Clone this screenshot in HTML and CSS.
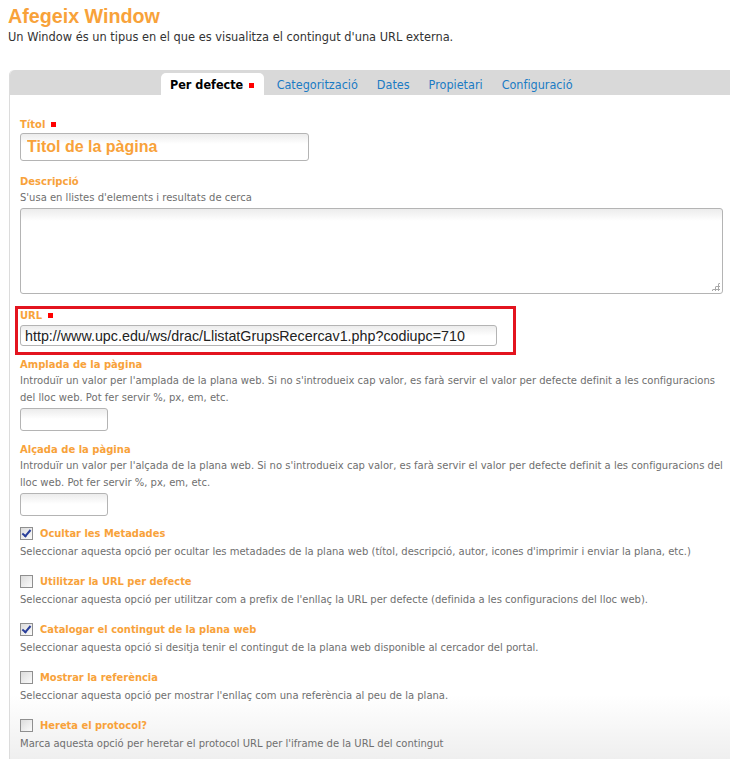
FILE: index.html
```html
<!DOCTYPE html>
<html lang="ca">
<head>
  <meta charset="UTF-8" />
  <title>Afegeix Window</title>
  <link rel="stylesheet" href="styles.css">
</head>
<body>
  <h1 class="title">Afegeix Window</h1>
  <p class="intro">Un Window és un tipus en el que es visualitza el contingut d'una URL externa.</p>

  <div class="panel">
    <ul class="tabs">
      <li class="tab active">Per defecte <span class="req"></span></li>
      <li class="tab">Categorització</li>
      <li class="tab">Dates</li>
      <li class="tab">Propietari</li>
      <li class="tab">Configuració</li>
    </ul>

    <div class="content">
      <div class="field field-first">
        <label class="label">Títol <span class="req"></span></label>
        <input type="text" class="input input-title" value="Titol de la pàgina" />
      </div>

      <div class="field">
        <label class="label">Descripció</label>
        <p class="help">S'usa en llistes d'elements i resultats de cerca</p>
        <div class="textarea"><span class="grip"></span></div>
      </div>

      <div class="field field-error">
        <label class="label">URL <span class="req"></span></label>
        <input type="text" class="input input-url" value="http://www.upc.edu/ws/drac/LlistatGrupsRecercav1.php?codiupc=710" />
      </div>

      <div class="field field-small">
        <label class="label">Amplada de la pàgina</label>
        <p class="help">Introduïr un valor per l'amplada de la plana web. Si no s'introdueix cap valor, es farà servir el valor per defecte definit a les configuracions del lloc web. Pot fer servir %, px, em, etc.</p>
        <input type="text" class="input input-small" />
      </div>

      <div class="field">
        <label class="label">Alçada de la pàgina</label>
        <p class="help">Introduïr un valor per l'alçada de la plana web. Si no s'introdueix cap valor, es farà servir el valor per defecte definit a les configuracions del lloc web. Pot fer servir %, px, em, etc.</p>
        <input type="text" class="input input-small" />
      </div>

      <div class="check">
        <div class="check-row"><span class="box checked"></span><span class="label">Ocultar les Metadades</span></div>
        <p class="help">Seleccionar aquesta opció per ocultar les metadades de la plana web (títol, descripció, autor, icones d'imprimir i enviar la plana, etc.)</p>
      </div>

      <div class="check">
        <div class="check-row"><span class="box"></span><span class="label">Utilitzar la URL per defecte</span></div>
        <p class="help">Seleccionar aquesta opció per utilitzar com a prefix de l'enllaç la URL per defecte (definida a les configuracions del lloc web).</p>
      </div>

      <div class="check">
        <div class="check-row"><span class="box checked"></span><span class="label">Catalogar el contingut de la plana web</span></div>
        <p class="help">Seleccionar aquesta opció si desitja tenir el contingut de la plana web disponible al cercador del portal.</p>
      </div>

      <div class="check">
        <div class="check-row"><span class="box"></span><span class="label">Mostrar la referència</span></div>
        <p class="help">Seleccionar aquesta opció per mostrar l'enllaç com una referència al peu de la plana.</p>
      </div>

      <div class="check">
        <div class="check-row"><span class="box"></span><span class="label">Hereta el protocol?</span></div>
        <p class="help">Marca aquesta opció per heretar el protocol URL per l'iframe de la URL del contingut</p>
      </div>
    </div>
  </div>
</body>
</html>
```

FILE: styles.css
```css
body {
  margin: 0;
  background: #fff;
  font-family: 'DejaVu Sans', sans-serif;
  color: #333;
}
.title {
  margin: 5px 0 0 8px;
  font-family: 'Liberation Sans', Arial, sans-serif;
  font-size: 19.7px;
  font-weight: bold;
  color: #f8a23a;
  line-height: 22px;
}
.intro {
  margin: 3px 0 0 8px;
  font-size: 11.4px;
  line-height: 14px;
  color: #333;
}
.panel {
  margin: 26px 0 0 9px;
  border-left: 1px solid #dcdcdc;
  border-top-left-radius: 5px;
  background: linear-gradient(to bottom, #fff 0, #fff 625px, #ececec 700px);
}
.tabs {
  display: flex;
  margin: 0;
  padding: 3px 0 0 151px;
  height: 22px;
  list-style: none;
  background: #d9d9d9;
  border-top-left-radius: 5px;
}
.tab {
  padding: 4px 9.5px 0 9.5px;
  font-family: 'DejaVu Sans Condensed', 'DejaVu Sans', sans-serif;
  font-size: 12.5px;
  color: #1a7bc4;
}
.tab.active {
  background: #fff;
  color: #000;
  font-weight: bold;
  border-radius: 5px 5px 0 0;
  padding: 4px 10px 0 9px;
  margin-right: 3px;
}
.req {
  display: inline-block;
  width: 5px;
  height: 5px;
  background: #f00;
  margin-left: 2px;
  vertical-align: 1px;
}
.content {
  padding: 22px 0 10px 10px;
}
.field {
  margin-bottom: 12px;
}
.field-first {
  margin-bottom: 13px;
}
.field-small {
  margin-bottom: 11px;
}
.label {
  display: block;
  font-size: 10px;
  font-weight: bold;
  color: #f8a23a;
  line-height: 15px;
}
.help {
  margin: 0;
  font-size: 10px;
  line-height: 17px;
  color: #6f6f6f;
}
.input {
  display: block;
  box-sizing: border-box;
  margin-top: 2px;
  border: 1px solid #b4b4b4;
  border-radius: 3px;
  background: linear-gradient(to bottom, #ececec 0, #fff 10px);
  font-family: 'Liberation Sans', Arial, sans-serif;
  outline: none;
}
.input-title {
  width: 289px;
  height: 28px;
  margin-top: 1px;
  padding: 0 6px;
  font-size: 16px;
  font-weight: bold;
  color: #f8a23a;
}
.textarea {
  position: relative;
  box-sizing: border-box;
  margin-top: 2px;
  width: 703px;
  height: 86px;
  border: 1px solid #b4b4b4;
  border-radius: 3px;
  background: linear-gradient(to bottom, #ececec 0, #fff 12px);
}
.grip {
  position: absolute;
  right: 2px;
  bottom: 2px;
  width: 9px;
  height: 9px;
  background: radial-gradient(circle, #a8a8a8 1px, transparent 1.2px) 0 0 / 3px 3px;
  clip-path: polygon(100% 0, 100% 100%, 0 100%);
}
.field-error {
  margin: 0 0 2px -5px;
  width: 493px;
  border: 3px solid #e3141f;
  padding: 0 0 6px 2px;
}
.field-error .label {
  margin-top: -1px;
}
.input-url {
  width: 477px;
  height: 21px;
  margin-top: 2px;
  padding: 0 4px;
  font-size: 14.3px;
  color: #222;
}
.input-small {
  width: 88px;
  height: 23px;
}
.check {
  margin-top: 12px;
}
.field + .check {
  margin-top: -4px;
}
.check-row {
  display: flex;
  align-items: center;
  height: 19px;
}
.check-row .label {
  font-family: 'DejaVu Sans Condensed', 'DejaVu Sans', sans-serif;
  font-size: 11px;
  margin-left: 7px;
}
.box {
  box-sizing: border-box;
  width: 13px;
  height: 13px;
  border: 1px solid #8f8f8f;
  background: linear-gradient(135deg, #dcdcdc, #fbfbfb);
  position: relative;
}
.box.checked::after {
  content: "";
  position: absolute;
  left: 3px;
  top: 0;
  width: 3px;
  height: 7px;
  border: solid #2a3f9a;
  border-width: 0 2px 2px 0;
  transform: rotate(40deg);
}
```
